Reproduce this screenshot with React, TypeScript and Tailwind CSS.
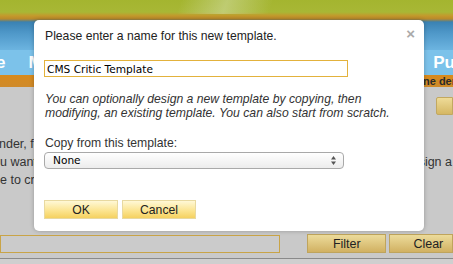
import React from 'react';

const arial = { fontFamily: '"Liberation Sans", Arial, sans-serif' };
const lucida = { fontFamily: '"DejaVu Sans", sans-serif' };

function Background() {
  return (
    <div className="flex flex-col w-full h-full" style={arial}>
      <div className="h-[22px] relative bg-[linear-gradient(to_bottom,#a4b52f_0%,#a8b735_55%,#c4992c_72%,#b98a2a_86%,#3a7fae_100%)]">
        <div className="absolute left-[170px] top-0 w-[110px] h-[14px] bg-[linear-gradient(110deg,rgba(255,255,255,0)_10%,rgba(220,230,190,0.45)_50%,rgba(255,255,255,0)_90%)]" />
      </div>
      <div className="h-[28px] bg-[linear-gradient(to_bottom,#3a82b3_0%,#4f98c9_40%,#6cb4e0_100%)]" />
      <div className="h-[25px] bg-[#7cc2ea] flex items-center text-white font-bold text-[17px] leading-none">
        <span className="-ml-[4px]">e</span>
        <span className="ml-[23px]">M</span>
        <span className="ml-auto mr-[-2px]">Pu</span>
      </div>
      <div className="h-[12px] bg-[linear-gradient(to_bottom,#d88a1c,#cf8a2a)] flex items-center justify-end text-[11px] font-bold text-[#2a2a2a] leading-none">
        <span className="mr-[-3px]">ne der</span>
      </div>
      <div className="flex-1 bg-[#c9c9c9] flex flex-col text-[12.5px] text-[#333]">
        <div className="mt-[10px] h-[18px] flex justify-end">
          <div className="w-[17px] rounded-l-[2px] border border-[#c2a860] bg-[linear-gradient(to_bottom,#eedb98,#d5b763)]" />
        </div>
        <div className="mt-[20px] leading-[18px] whitespace-nowrap">
          <div className="-ml-[1px]">nder, fo</div>
          <div className="flex justify-between">
            <span>u want,</span>
            <span className="mr-[1px]">sign a</span>
          </div>
          <div>e to cre</div>
        </div>
        <div className="mt-[45px] flex items-center h-[19px]">
          <div className="w-[283px] h-[18px] border border-[#c9a447] bg-[#cbcbcb]" />
          <button className="ml-[27px] w-[80px] h-[19px] border border-[#bfa45c] bg-[linear-gradient(to_bottom,#ecdb9b,#d1b162)] text-[12.5px] text-[#222]">
            Filter
          </button>
          <button className="ml-[3px] w-[64px] h-[19px] border border-[#bfa45c] bg-[linear-gradient(to_bottom,#ecdb9b,#d1b162)] text-[12.5px] text-[#222] text-left pl-[23px]">
            Clear
          </button>
        </div>
        <div className="mt-[5px] border-t border-[#8a8a8a] flex-1 bg-[#cfcfcf]" />
      </div>
    </div>
  );
}

function TemplateDialog() {
  return (
    <div
      className="absolute left-[34px] top-[20px] w-[390px] h-[211px] bg-white rounded-[5px] shadow-[0_0_4px_rgba(0,0,0,0.25)] px-[10px] pt-[8px] text-[#222]"
      style={arial}
    >
      <div className="absolute right-[9px] top-[6px] text-[#aaa] text-[15px] font-bold leading-none">×</div>
      <div className="text-[12.2px] leading-[16px] pl-[1px]">Please enter a name for this new template.</div>
      <input
        readOnly
        value="CMS Critic Template"
        className="block mt-[16px] w-[304px] h-[17px] border border-[#e3b23c] px-[2px] text-[10.6px] text-black outline-none"
        style={lucida}
      />
      <p className="mt-[15px] text-[12.2px] leading-[14px] italic text-[#333] pl-[1px]">
        You can optionally design a new template by copying, then
        <br />
        modifying, an existing template. You can also start from scratch.
      </p>
      <div className="mt-[16px] text-[12.2px] leading-[14px] text-[#333] pl-[1px]">Copy from this template:</div>
      <div
        className="mt-[2px] w-[300px] h-[17px] rounded-[4px] border border-[#a9a9a9] bg-[linear-gradient(to_bottom,#ffffff,#ececec)] flex items-center justify-between pl-[8px] pr-[7px] text-[10.6px] text-black"
        style={lucida}
      >
        <span>None</span>
        <svg width="5" height="9" viewBox="0 0 5 9" fill="#555">
          <path d="M2.5 0 L5 3.5 H0 Z" />
          <path d="M2.5 9 L5 5.5 H0 Z" />
        </svg>
      </div>
      <div className="mt-[31px] flex gap-[4px]">
        <button className="w-[74px] h-[19px] border border-[#e8d9a0] bg-[linear-gradient(to_bottom,#fff8d6,#fbe38c_60%,#f5d160)] text-[12.2px] text-[#222]">
          OK
        </button>
        <button className="w-[74px] h-[19px] border border-[#e8d9a0] bg-[linear-gradient(to_bottom,#fff8d6,#fbe38c_60%,#f5d160)] text-[12.2px] text-[#222]">
          Cancel
        </button>
      </div>
    </div>
  );
}

export default function App() {
  return (
    <div className="relative w-[453px] h-[264px] overflow-hidden">
      <Background />
      <TemplateDialog />
    </div>
  );
}
